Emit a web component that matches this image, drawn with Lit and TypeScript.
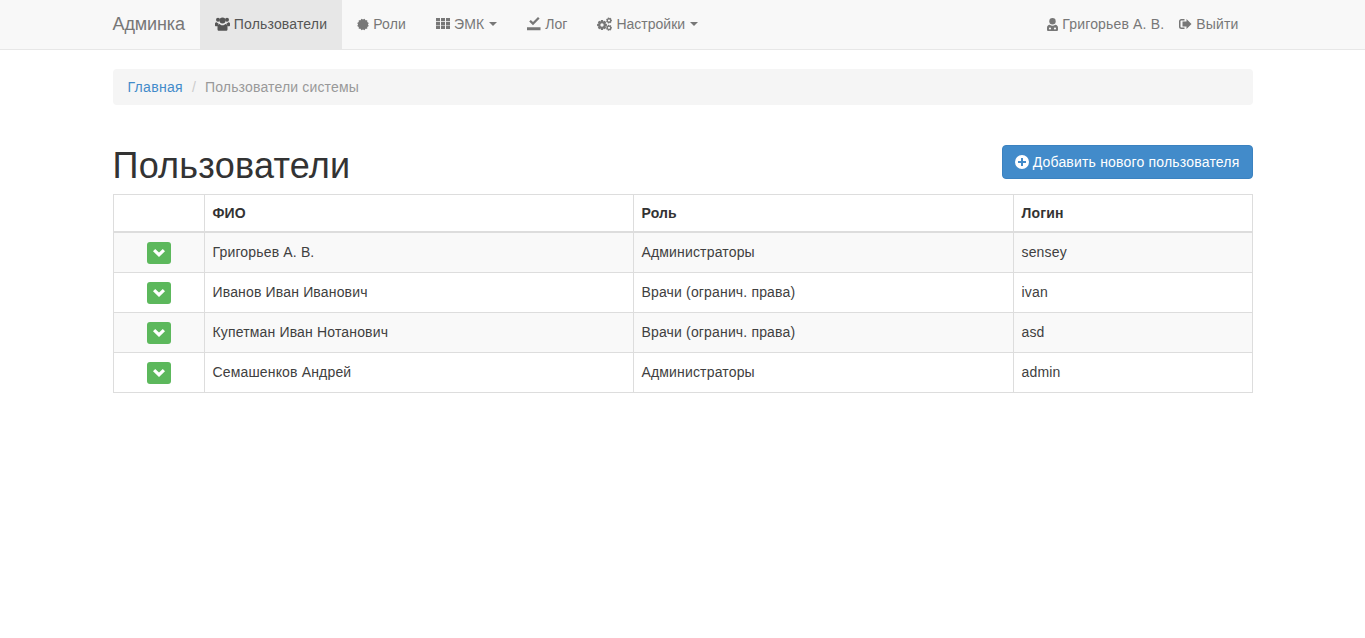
import { LitElement, html, css, svg } from 'lit';
import { customElement } from 'lit/decorators.js';

// 12-point burst for the "Роли" icon
const burst = () => {
  const pts: string[] = [];
  for (let i = 0; i < 24; i++) {
    const r = i % 2 ? 6 : 4.9;
    const a = (Math.PI * i) / 12;
    pts.push(`${(6 + r * Math.sin(a)).toFixed(2)},${(7.5 - r * Math.cos(a)).toFixed(2)}`);
  }
  return pts.join(' ');
};

// gear outline with a round hole, used for the "Настройки" icon
const gear = (cx: number, cy: number, R: number, r: number, hole: number, teeth: number) => {
  let d = '';
  const step = (Math.PI * 2) / teeth;
  for (let i = 0; i < teeth; i++) {
    const a = i * step;
    const p = [
      [r, a - step * 0.5],
      [R, a - step * 0.25],
      [R, a + step * 0.25],
    ];
    for (const [rad, ang] of p) {
      d += `${d ? 'L' : 'M'}${(cx + rad * Math.cos(ang)).toFixed(2)} ${(cy + rad * Math.sin(ang)).toFixed(2)}`;
    }
  }
  d += `ZM${cx - hole} ${cy}a${hole} ${hole} 0 1 0 ${hole * 2} 0a${hole} ${hole} 0 1 0 ${-hole * 2} 0Z`;
  return d;
};

const icons = {
  users: html`<svg viewBox="0 0 15 14" fill="currentColor"><circle cx="3" cy="2.800" r="2"/><circle cx="12" cy="2.800" r="2"/><circle cx="7.500" cy="3.500" r="3"/><path d="M0 6.800c0-1 .7-1.500 1.600-1.500.5.7 1.200 1.100 2 1.200C3 7.300 2.700 8.200 2.700 9.300H1c-.6 0-1-.4-1-1zM15 6.800c0-1-.7-1.500-1.600-1.500-.5.7-1.200 1.100-2 1.200.6.800.9 1.700.9 2.800H14c.6 0 1-.4 1-1zM4.700 6.900c.7.8 1.700 1.300 2.800 1.300s2.100-.5 2.800-1.300c1.400 0 2.200 1.100 2.200 2.900v2.400c0 1-.7 1.600-1.500 1.600H4c-.8 0-1.500-.6-1.500-1.600V9.800c0-1.800.8-2.900 2.200-2.900z"/></svg>`,
  burst: html`<svg viewBox="0 0 12 14" fill="currentColor">${svg`<polygon points=${burst()}/>`}</svg>`,
  th: html`<svg viewBox="0 0 14 14" fill="currentColor"><path d="M0 1h4v3.300H0zM5 1h4v3.300H5zM10 1h4v3.300h-4zM0 4.900h4v3.300H0zM5 4.900h4v3.300H5zM10 4.900h4v3.300h-4zM0 8.800h4V12H0zM5 8.800h4V12H5zM10 8.800h4V12h-4z"/></svg>`,
  saved: html`<svg viewBox="0 0 14 14" fill="currentColor"><path d="M0 10.200h13.500v3H0zM2.200 4.500 3.800 2.900 6 5 11 0l1.600 1.600L6 8.300z"/></svg>`,
  cogs: html`<svg viewBox="0 0 15 14" fill="currentColor" fill-rule="evenodd">${svg`<path d=${gear(5, 8, 5, 3.7, 1.7, 8)}/><path d=${gear(12, 3.5, 3, 2.2, 1.1, 7)}/><path d=${gear(12, 10.8, 3, 2.2, 1.1, 7)}/>`}</svg>`,
  userMd: html`<svg viewBox="0 0 11 14" fill="currentColor" fill-rule="evenodd"><path d="M5.500 1a3.200 3.200 0 1 1 0 6.400 3.200 3.200 0 0 1 0-6.400z"/><path d="M2.700 7.800c.8.600 1.800.9 2.800.9s2-.3 2.800-.9c1.600.2 2.700 1.300 2.700 3V12.700c0 .8-.6 1.300-1.300 1.300H1.300C.6 14 0 13.500 0 12.700v-1.900c0-1.700 1.100-2.800 2.700-3zM3 10.400a1.100 1.100 0 1 0 0 2.200 1.100 1.100 0 0 0 0-2.200zM8 10.400a1.100 1.100 0 1 0 0 2.200 1.100 1.100 0 0 0 0-2.200z"/></svg>`,
  logOut: html`<svg viewBox="0 0 13 14" fill="currentColor"><path d="M5.500 2H2.300C1 2 0 3 0 4.300v5.400C0 11 1 12 2.300 12h3.200v-1.500H2.500c-.6 0-1-.4-1-1V4.500c0-.6.4-1 1-1h3z"/><path d="M7.500 2 12.500 7l-5 5V9.500H3.500v-5h4z"/></svg>`,
  plus: html`<svg viewBox="0 0 14 14" fill="currentColor" fill-rule="evenodd"><path d="M7 0a7 7 0 1 1 0 14A7 7 0 0 1 7 0zM6 3v3H3v2h3v3h2V8h3V6H8V3z"/></svg>`,
  chevron: html`<svg viewBox="0 0 12 8" fill="currentColor"><path d="M2.200 0 6 3.600 9.800 0 12 2.200 6 8 0 2.200z"/></svg>`,
};

const users = [
  ['Григорьев А. В.', 'Администраторы', 'sensey'],
  ['Иванов Иван Иванович', 'Врачи (огранич. права)', 'ivan'],
  ['Купетман Иван Нотанович', 'Врачи (огранич. права)', 'asd'],
  ['Семашенков Андрей', 'Администраторы', 'admin'],
];

@customElement('app-root')
export class AppRoot extends LitElement {
  static styles = css`
    :host {
      display: block;
      min-height: 638px;
      background: #fff;
      color: #333;
      font: 14px/20px 'Liberation Sans', Arial, sans-serif;
      letter-spacing: 0.16px;
    }

    a {
      color: inherit;
      text-decoration: none;
    }

    .navbar {
      height: 49px;
      background: #f8f8f8;
      border-bottom: 1px solid #e7e7e7;
      margin-bottom: 19px;
    }

    .wrap {
      width: 1140px;
      margin-left: 112.5px;
    }

    .navbar .wrap {
      display: flex;
      height: 49px;
      color: #777;
    }

    .brand {
      font-size: 18px;
      line-height: 48px;
      letter-spacing: -0.12px;
      margin-right: 15px;
    }

    .nav {
      display: flex;
    }

    .nav.right {
      margin-left: auto;
      margin-right: -1px;
    }

    .nav a {
      display: flex;
      align-items: center;
      padding: 0 15px 1px;
    }

    .nav a.tight {
      letter-spacing: 0;
    }

    .nav.right a + a {
      padding-left: 0;
    }

    .nav a.active {
      background: #e7e7e7;
      color: #555;
    }

    .nav svg {
      height: 14px;
      width: auto;
      margin-right: 4px;
      flex: none;
    }

    .caret {
      width: 0;
      height: 0;
      margin-left: 5px;
      border-top: 4px solid;
      border-left: 4px solid transparent;
      border-right: 4px solid transparent;
    }

    .breadcrumb {
      display: flex;
      padding: 8px 15px;
      background: #f5f5f5;
      border-radius: 4px;
      margin-bottom: 40px;
      color: #999;
    }

    .breadcrumb a {
      color: #428bca;
      letter-spacing: 0.3px;
    }

    .breadcrumb .sep {
      padding: 0 9px;
      color: #ccc;
    }

    .head {
      display: flex;
      justify-content: space-between;
      align-items: flex-start;
      margin-bottom: 8px;
    }

    h1 {
      margin: 0;
      padding-top: 1px;
      font-size: 36px;
      font-weight: 500;
      line-height: 40px;
      letter-spacing: 0.25px;
    }

    .add {
      display: flex;
      align-items: center;
      height: 34px;
      box-sizing: border-box;
      padding: 0 12px;
      background: #428bca;
      border: 1px solid #3b82c0;
      border-radius: 4px;
      color: #fff;
      letter-spacing: 0.19px;
    }

    .add svg {
      width: 14px;
      height: 14px;
      margin-right: 4px;
    }

    table {
      width: 1140px;
      table-layout: fixed;
      border-collapse: collapse;
    }

    .c0 { width: 91px; }
    .c1 { width: 429px; }
    .c2 { width: 380px; }

    th,
    td {
      padding: 8px;
      border: 1px solid #ddd;
      text-align: left;
    }

    th {
      border-bottom-width: 2px;
      font-weight: bold;
    }

    tbody tr:nth-child(odd) {
      background: #f9f9f9;
    }

    td {
      height: 23px;
      padding: 7px 8px 9px;
      color: #404040;
    }

    td.toggle {
      text-align: center;
      padding-top: 0;
      padding-bottom: 0;
      vertical-align: middle;
    }

    .expand {
      display: inline-flex;
      align-items: center;
      justify-content: center;
      vertical-align: middle;
      width: 24px;
      height: 22px;
      background: #5cb85c;
      border-radius: 3px;
      color: #fff;
    }

    .expand svg {
      width: 12px;
      height: 8px;
    }
  `;

  render() {
    return html`
      <nav class="navbar">
        <div class="wrap">
          <a class="brand" href="#">Админка</a>
          <div class="nav">
            <a class="active" href="#">${icons.users}Пользователи</a>
            <a href="#">${icons.burst}Роли</a>
            <a href="#">${icons.th}ЭМК<span class="caret"></span></a>
            <a class="tight" href="#">${icons.saved}Лог</a>
            <a class="tight" href="#">${icons.cogs}Настройки<span class="caret"></span></a>
          </div>
          <div class="nav right">
            <a href="#">${icons.userMd}Григорьев А. В.</a>
            <a href="#">${icons.logOut}Выйти</a>
          </div>
        </div>
      </nav>
      <main class="wrap">
        <div class="breadcrumb">
          <a href="#">Главная</a><span class="sep">/</span><span>Пользователи системы</span>
        </div>
        <div class="head">
          <h1>Пользователи</h1>
          <a class="add" href="#">${icons.plus}Добавить нового пользователя</a>
        </div>
        <table>
          <colgroup><col class="c0" /><col class="c1" /><col class="c2" /><col /></colgroup>
          <thead>
            <tr><th></th><th>ФИО</th><th>Роль</th><th>Логин</th></tr>
          </thead>
          <tbody>
            ${users.map(
              (u) => html`<tr>
                <td class="toggle"><a class="expand" href="#">${icons.chevron}</a></td>
                <td>${u[0]}</td>
                <td>${u[1]}</td>
                <td>${u[2]}</td>
              </tr>`
            )}
          </tbody>
        </table>
      </main>
    `;
  }
}
